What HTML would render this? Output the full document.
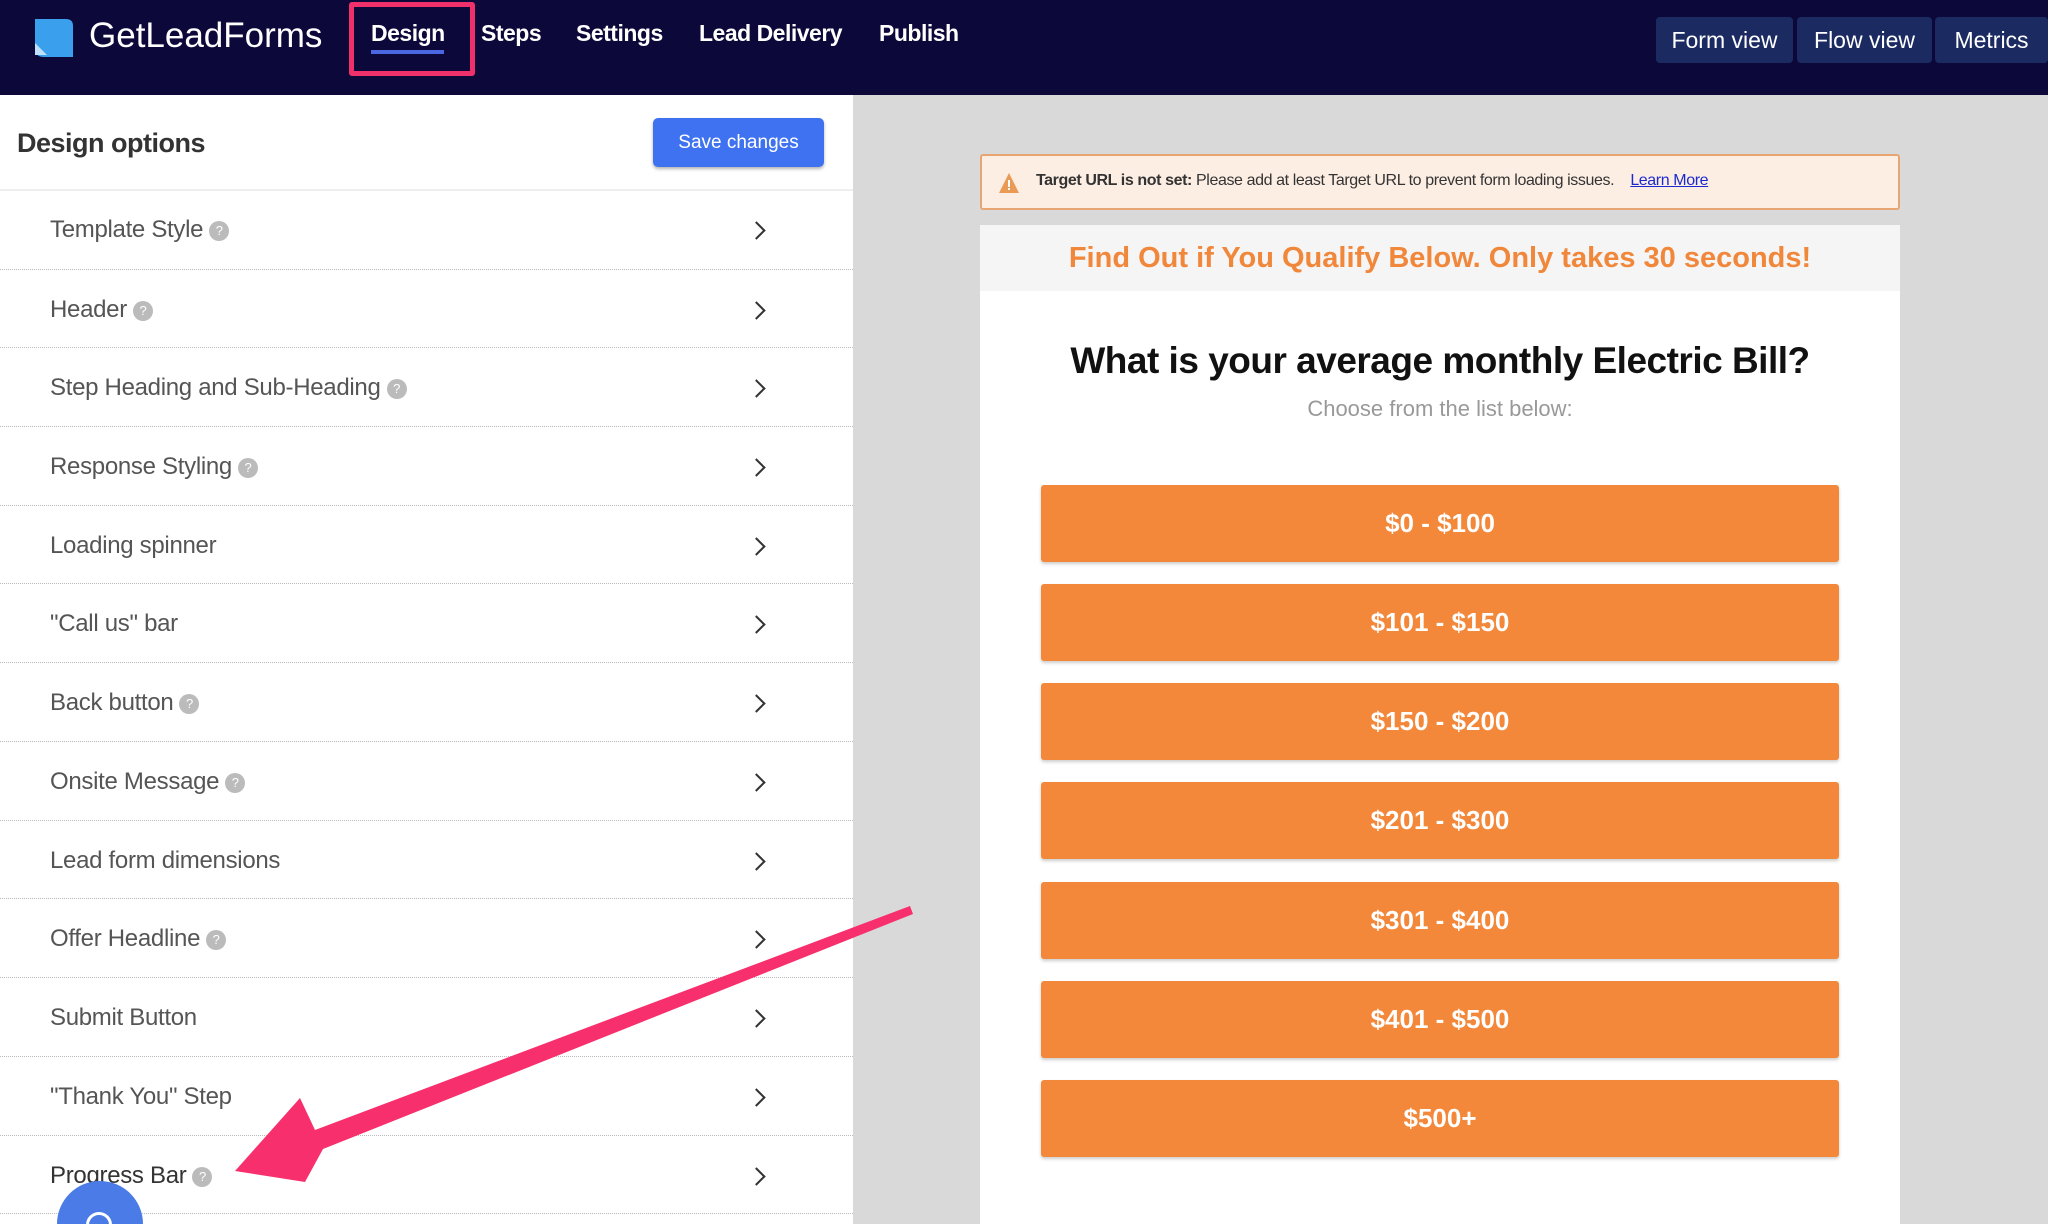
<!DOCTYPE html>
<html><head><meta charset="utf-8"><style>
*{margin:0;padding:0;box-sizing:border-box}
html,body{width:2048px;height:1224px;overflow:hidden}
body{position:relative;font-family:"Liberation Sans",sans-serif;background:#d9d9d9}
#wrap{position:absolute;left:0;top:0;width:2048px;height:1224px;overflow:hidden}
.nav{position:absolute;left:0;top:0;width:2048px;height:95px;background:#0c093a}
.logo{position:absolute;left:89px;top:15px;color:#fff;font-size:35px;line-height:42px}
.ni{position:absolute;top:20px;color:#fff;font-weight:bold;font-size:23px;letter-spacing:-0.5px}
.hl{position:absolute;left:349px;top:2px;width:126px;height:74px;border:5px solid #f0306a;border-radius:3px}
.ul{position:absolute;left:371px;top:50px;width:73px;height:4px;background:#4a66e0}
.rb{position:absolute;top:17px;height:46px;background:#1b2b62;color:#fff;font-size:23px;line-height:46px;text-align:center;border-radius:4px}
.left{position:absolute;left:0;top:95px;width:853px;height:1129px;background:#fff}
.title{position:absolute;left:17px;top:128px;font-size:27px;font-weight:bold;color:#333;letter-spacing:-0.5px}
.save{position:absolute;left:653px;top:118px;width:171px;height:49px;background:#3f72f0;color:#fff;font-size:19px;line-height:49px;text-align:center;border-radius:5px;box-shadow:0 2px 3px rgba(0,0,0,.3)}
.row{position:absolute;left:0;width:853px;height:79px;border-top:1px dotted #bbb}
.row span.t{position:absolute;left:50px;top:26px;font-size:24px;color:#555;letter-spacing:-0.3px}
.q{display:inline-block;width:20px;height:20px;border-radius:50%;background:#bbb;color:#fff;font-size:13px;line-height:20px;text-align:center;margin-left:6px;vertical-align:2px}
.chev{position:absolute;left:750px;top:34px;width:13px;height:13px;border-right:2.5px solid #333;border-top:2.5px solid #333;transform:rotate(45deg)}
.alert{position:absolute;left:980px;top:154px;width:920px;height:56px;background:#fdeee3;border:2px solid #e8a574;border-radius:3px;font-size:16px;color:#333}
.card{position:absolute;left:980px;top:225px;width:920px;height:999px;background:#fff}
.band{height:66px;background:#f5f5f5;color:#f0873a;font-weight:bold;font-size:29px;text-align:center;line-height:66px}
.btn{position:absolute;left:61px;width:798px;height:77px;background:#f3883a;color:#fff;font-weight:bold;font-size:26px;text-align:center;line-height:77px;border-radius:3px;box-shadow:0 2px 3px rgba(0,0,0,.2)}
</style></head><body><div id="wrap">
<div class="nav">
<svg style="position:absolute;left:33px;top:17px" width="42" height="42" viewBox="0 0 42 42"><path d="M2 2H33Q40 2 40 9V40H11Q2 40 2 31Z" fill="#3aa0ee"/><path d="M2 26L14 38L2 38Z" fill="#bfe0fb"/></svg>
<div class="logo">GetLeadForms</div>
<div class="hl"></div>
<div class="ni" style="left:371px">Design</div><div class="ul"></div>
<div class="ni" style="left:481px">Steps</div>
<div class="ni" style="left:576px">Settings</div>
<div class="ni" style="left:699px">Lead Delivery</div>
<div class="ni" style="left:879px">Publish</div>
<div class="rb" style="left:1656px;width:137px">Form view</div>
<div class="rb" style="left:1797px;width:135px">Flow view</div>
<div class="rb" style="left:1935px;width:113px">Metrics</div>
</div>
<div class="left"></div>
<div class="title">Design options</div>
<div class="save">Save changes</div>
<div style="position:absolute;left:0;top:189px;width:853px;height:2px;background:#eee"></div>
<div class="row" style="top:190px;border-top:none"><span class="t">Template Style<span class="q">?</span></span><div class="chev"></div></div>
<div class="row" style="top:269px"><span class="t">Header<span class="q">?</span></span><div class="chev"></div></div>
<div class="row" style="top:347px"><span class="t">Step Heading and Sub-Heading<span class="q">?</span></span><div class="chev"></div></div>
<div class="row" style="top:426px"><span class="t">Response Styling<span class="q">?</span></span><div class="chev"></div></div>
<div class="row" style="top:505px"><span class="t">Loading spinner</span><div class="chev"></div></div>
<div class="row" style="top:583px"><span class="t">"Call us" bar</span><div class="chev"></div></div>
<div class="row" style="top:662px"><span class="t">Back button<span class="q">?</span></span><div class="chev"></div></div>
<div class="row" style="top:741px"><span class="t">Onsite Message<span class="q">?</span></span><div class="chev"></div></div>
<div class="row" style="top:820px"><span class="t">Lead form dimensions</span><div class="chev"></div></div>
<div class="row" style="top:898px"><span class="t">Offer Headline<span class="q">?</span></span><div class="chev"></div></div>
<div class="row" style="top:977px"><span class="t">Submit Button</span><div class="chev"></div></div>
<div class="row" style="top:1056px"><span class="t">"Thank You" Step</span><div class="chev"></div></div>
<div class="row" style="top:1135px"><span class="t" style="color:#333">Progress Bar<span class="q">?</span></span><div class="chev"></div></div>
<div class="row" style="top:1213px;height:11px"></div>
<div style="position:absolute;left:57px;top:1181px;width:86px;height:43px;overflow:hidden">
<div style="position:absolute;left:0;top:0;width:86px;height:86px;border-radius:50%;background:#4a7be6"></div>
<div style="position:absolute;left:29px;top:31px;width:26px;height:26px;border-radius:50%;border:3px solid #fff"></div>
</div>
<div class="alert">
<svg style="position:absolute;left:16px;top:16px" width="22" height="22" viewBox="0 0 22 22"><path d="M11 1L21 21H1Z" fill="#e99a55"/><rect x="10" y="8" width="2" height="7" fill="#fff"/><rect x="10" y="16" width="2" height="2" fill="#fff"/></svg>
<div style="position:absolute;left:54px;top:16px;letter-spacing:-0.4px"><b>Target URL is not set:</b> Please add at least Target URL to prevent form loading issues.&nbsp;&nbsp;&nbsp; <span style="color:#1a2ad0;text-decoration:underline">Learn More</span></div>
</div>
<div class="card">
<div class="band">Find Out if You Qualify Below. Only takes 30 seconds!</div>
<div style="position:absolute;left:0;top:115px;width:920px;text-align:center;font-size:37px;font-weight:bold;color:#111;letter-spacing:-0.5px">What is your average monthly Electric Bill?</div>
<div style="position:absolute;left:0;top:171px;width:920px;text-align:center;font-size:22px;color:#999">Choose from the list below:</div>
<div class="btn" style="top:260px">$0 - $100</div>
<div class="btn" style="top:359px">$101 - $150</div>
<div class="btn" style="top:458px">$150 - $200</div>
<div class="btn" style="top:557px">$201 - $300</div>
<div class="btn" style="top:657px">$301 - $400</div>
<div class="btn" style="top:756px">$401 - $500</div>
<div class="btn" style="top:855px">$500+</div>
</div>
<svg style="position:absolute;left:0;top:0" width="2048" height="1224"><path d="M235 1171L300 1098L315 1130L910 906L913 914L323 1149L305 1182Z" fill="#f7306d"/></svg>
</div></body></html>
